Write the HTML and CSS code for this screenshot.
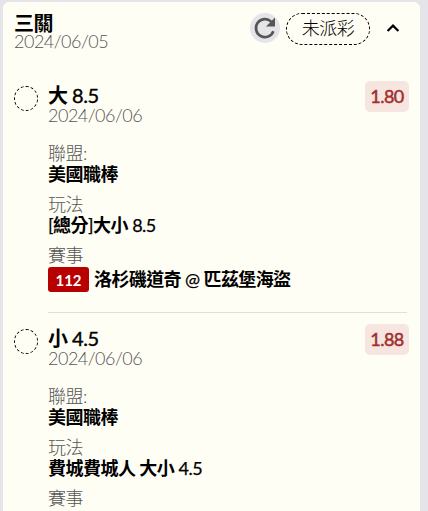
FILE: index.html
```html
<!DOCTYPE html>
<html lang="zh-Hant">
<head>
    <meta charset="UTF-8">
    <meta name="viewport" content="width=device-width, initial-scale=1.0">
    <title>三關</title>
    <link rel="stylesheet" href="styles.css">
</head>
<body>
    <div class="card">
        <!-- Header -->
        <div class="header">
            <div class="header-info">
                <div class="header-title">三關</div>
                <div class="date">2024/06/05</div>
            </div>
            <button class="refresh" aria-label="refresh">
                <svg width="30" height="30" viewBox="0 0 30 30">
                    <path d="M23.4 18.2A9 9 0 1 1 21.2 8.6" fill="none" stroke="#555" stroke-width="2.6"/>
                    <path d="M25 4.6V13.6H16Z" fill="#555"/>
                </svg>
            </button>
            <div class="status">未派彩</div>
            <svg class="arrow" width="14" height="10" viewBox="0 0 14 10">
                <path d="M1.6 8L7 2.6L12.4 8" fill="none" stroke="#000" stroke-width="2.2"/>
            </svg>
        </div>

        <!-- Bets -->
        <div class="bet">
            <div class="circle"></div>
            <div class="bet-body">
                <div class="bet-top">
                    <div>
                        <div class="bet-title"><b>大</b> 8.5</div>
                        <div class="date">2024/06/06</div>
                    </div>
                    <div class="odds">1.80</div>
                </div>
                <div class="group">
                    <div class="label">聯盟:</div>
                    <div class="value"><b>美國職棒</b></div>
                </div>
                <div class="group">
                    <div class="label">玩法</div>
                    <div class="value">[<b>總分</b>]<b>大小</b> 8.5</div>
                </div>
                <div class="group">
                    <div class="label">賽事</div>
                    <div class="match">
                        <span class="match-no">112</span>
                        <span class="value"><b>洛杉磯道奇</b> @ <b>匹茲堡海盜</b></span>
                    </div>
                </div>
            </div>
        </div>

        <div class="bet">
            <div class="circle"></div>
            <div class="bet-body">
                <div class="bet-top">
                    <div>
                        <div class="bet-title"><b>小</b> 4.5</div>
                        <div class="date">2024/06/06</div>
                    </div>
                    <div class="odds">1.88</div>
                </div>
                <div class="group">
                    <div class="label">聯盟:</div>
                    <div class="value"><b>美國職棒</b></div>
                </div>
                <div class="group">
                    <div class="label">玩法</div>
                    <div class="value"><b>費城費城人 大小</b> 4.5</div>
                </div>
                <div class="group">
                    <div class="label">賽事</div>
                </div>
            </div>
        </div>
    </div>
</body>
</html>
```
FILE: styles.css
```css
* {
    box-sizing: border-box;
}
body {
    margin: 0;
    height: 511px;
    overflow: hidden;
    padding: 2px 8px 0 3px;
    background-color: #e4e4e9;
    font-family: Lato, "Noto Sans CJK TC", sans-serif;
    font-size: 18px;
    letter-spacing: -0.5px;
    color: #000;
}
.card {
    height: 509px;
    overflow: hidden;
    padding: 10px 11px 0;
    background-color: #fffef5;
    border-radius: 6px 6px 0 0;
}
.header {
    display: flex;
    align-items: flex-start;
    height: 70px;
}
.header-info {
    flex: 1;
}
.header-title {
    height: 19px;
    font-size: 20px;
    line-height: 22px;
    font-weight: bold;
}
.date {
    line-height: 20px;
    font-weight: 300;
    color: #555;
}
.refresh {
    width: 30px;
    height: 30px;
    margin-top: 1px;
    padding: 0;
    border: none;
    border-radius: 50%;
    background-color: #e4e4e9;
}
.refresh svg {
    display: block;
}
.status {
    width: 84px;
    height: 32px;
    margin: 1px 16px 0 6px;
    border: 1px dashed #000;
    border-radius: 16px;
    text-align: center;
    line-height: 28px;
    font-weight: 300;
}
.arrow {
    margin: 11px 9px 0 0;
}
.bet {
    display: flex;
    height: 243px;
}
.circle {
    width: 24px;
    height: 25px;
    margin: 4px 10px 0 0;
    border: 1px dashed #000;
    border-radius: 50%;
}
.bet-body {
    flex: 1;
    height: 231px;
    margin-right: 2px;
    border-bottom: 1px solid #dfdfdf;
}
.bet-top {
    display: flex;
    justify-content: space-between;
    height: 61px;
    margin-right: -2px;
}
.bet-title {
    margin-top: 3px;
    font-size: 20px;
    line-height: 20px;
    -webkit-text-stroke: 0.4px #000;
}
.odds {
    width: 44px;
    height: 31px;
    margin-top: -1px;
    border-radius: 5px;
    background-color: #f7e6df;
    color: #a03030;
    text-align: center;
    line-height: 31px;
    font-size: 18px;
    -webkit-text-stroke: 0.5px #a03030;
}
.group {
    margin-bottom: 9px;
}
.label {
    line-height: 21px;
    font-weight: 300;
    color: #555;
}
.value {
    line-height: 21px;
    -webkit-text-stroke: 0.25px #000;
}
.bet-title b,
.value b {
    -webkit-text-stroke: 0;
}
.match {
    display: flex;
    align-items: center;
    gap: 5px;
    margin-top: 1px;
}
.match .value {
    letter-spacing: -0.6px;
}
.match-no {
    width: 41px;
    height: 25px;
    border-radius: 3px;
    background-color: #b80000;
    color: #fff;
    font-size: 15px;
    font-weight: bold;
    letter-spacing: 0;
    line-height: 27px;
    text-align: center;
}
```
